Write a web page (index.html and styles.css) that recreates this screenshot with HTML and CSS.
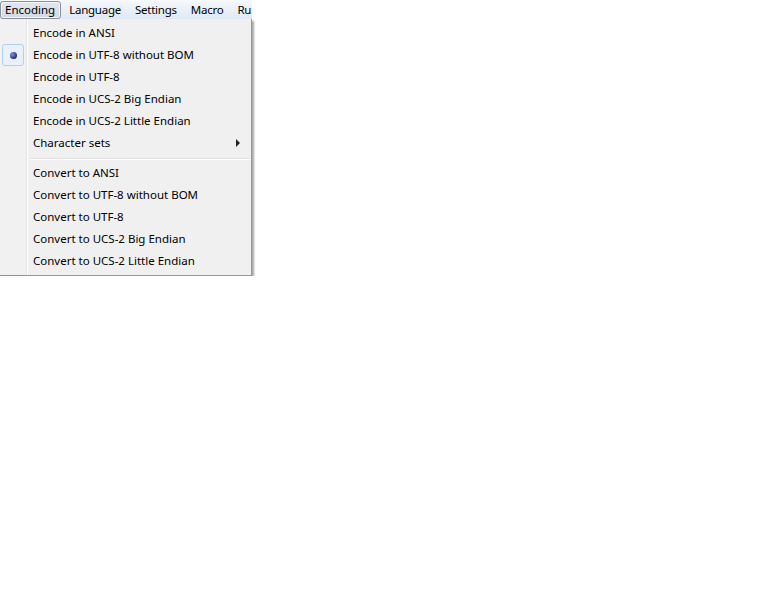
FILE: index.html
```html
<!DOCTYPE html>
<html lang="en">
<head>
    <meta charset="UTF-8">
    <title>Encoding menu</title>
    <link rel="stylesheet" href="styles.css">
</head>
<body>
    <div class="window">
        <div class="menubar">
            <span class="menu-title active">Encoding</span>
            <span class="menu-title">Language</span>
            <span class="menu-title">Settings</span>
            <span class="menu-title">Macro</span>
            <span class="menu-title">Run</span>
        </div>

        <div class="dropdown">
            <div class="item">Encode in ANSI</div>
            <div class="item checked">
                <span class="check"><span class="dot"></span></span>
                Encode in UTF-8 without BOM
            </div>
            <div class="item">Encode in UTF-8</div>
            <div class="item">Encode in UCS-2 Big Endian</div>
            <div class="item">Encode in UCS-2 Little Endian</div>
            <div class="item submenu">Character sets <span class="arrow"></span></div>
            <div class="separator"></div>
            <div class="item">Convert to ANSI</div>
            <div class="item">Convert to UTF-8 without BOM</div>
            <div class="item">Convert to UTF-8</div>
            <div class="item">Convert to UCS-2 Big Endian</div>
            <div class="item">Convert to UCS-2 Little Endian</div>
        </div>
    </div>
</body>
</html>
```

FILE: styles.css
```css
* {
    margin: 0;
    padding: 0;
    box-sizing: border-box;
}

body {
    background: #fff;
    font-family: 'Noto Sans', 'DejaVu Sans', sans-serif;
    font-size: 11.5px;
    color: #000;
}

.window {
    width: 252px;
}

.menubar {
    height: 19px;
    display: flex;
    align-items: center;
    overflow: hidden;
    white-space: nowrap;
    background: linear-gradient(#f6f9fd, #dfe8f5);
}

.menu-title {
    height: 18px;
    line-height: 16px;
    padding: 0 6px;
    letter-spacing: -0.25px;
    border: 1px solid transparent;
    margin-top: 1px;
}

.menu-title.active {
    padding: 0 5px 0 4px;
    letter-spacing: 0;
    border-color: #8b9099;
    border-radius: 3px;
    background: linear-gradient(#e1e6ee, #d2d9e3);
    box-shadow: inset 0 0 0 1px #f3f5f8;
}

.menu-title.active + .menu-title {
    padding-left: 7px;
}

.dropdown {
    position: relative;
    width: 252px;
    padding: 3px 0 3px 0;
    background: linear-gradient(to right, #f1f1f1 26px, #e2e3e3 26px, #e2e3e3 27px, #fff 27px, #fff 28px, #f0f0f0 28px);
    border-right: 1px solid #979797;
    border-bottom: 1px solid #979797;
    box-shadow: 2px 2px 2px rgba(0, 0, 0, 0.35);
}

.item {
    position: relative;
    height: 22px;
    line-height: 22px;
    padding-left: 33px;
    white-space: nowrap;
}

.check {
    position: absolute;
    left: 2px;
    top: 0;
    width: 22px;
    height: 22px;
    border: 1px solid #aecff7;
    border-radius: 3px;
    background: #e8f1fc;
    display: flex;
    align-items: center;
    justify-content: center;
}

.dot {
    width: 7px;
    height: 7px;
    border-radius: 50%;
    background: radial-gradient(circle at 35% 35%, #8b93d8, #23297c 70%);
}

.arrow {
    position: absolute;
    right: 11px;
    top: 7px;
    width: 0;
    height: 0;
    border-top: 4px solid transparent;
    border-bottom: 4px solid transparent;
    border-left: 4px solid #222;
}

.separator {
    height: 1px;
    margin: 4px 0 2px 30px;
    background: #e0e0e0;
    border-bottom: 1px solid #fff;
    box-sizing: content-box;
}
```
